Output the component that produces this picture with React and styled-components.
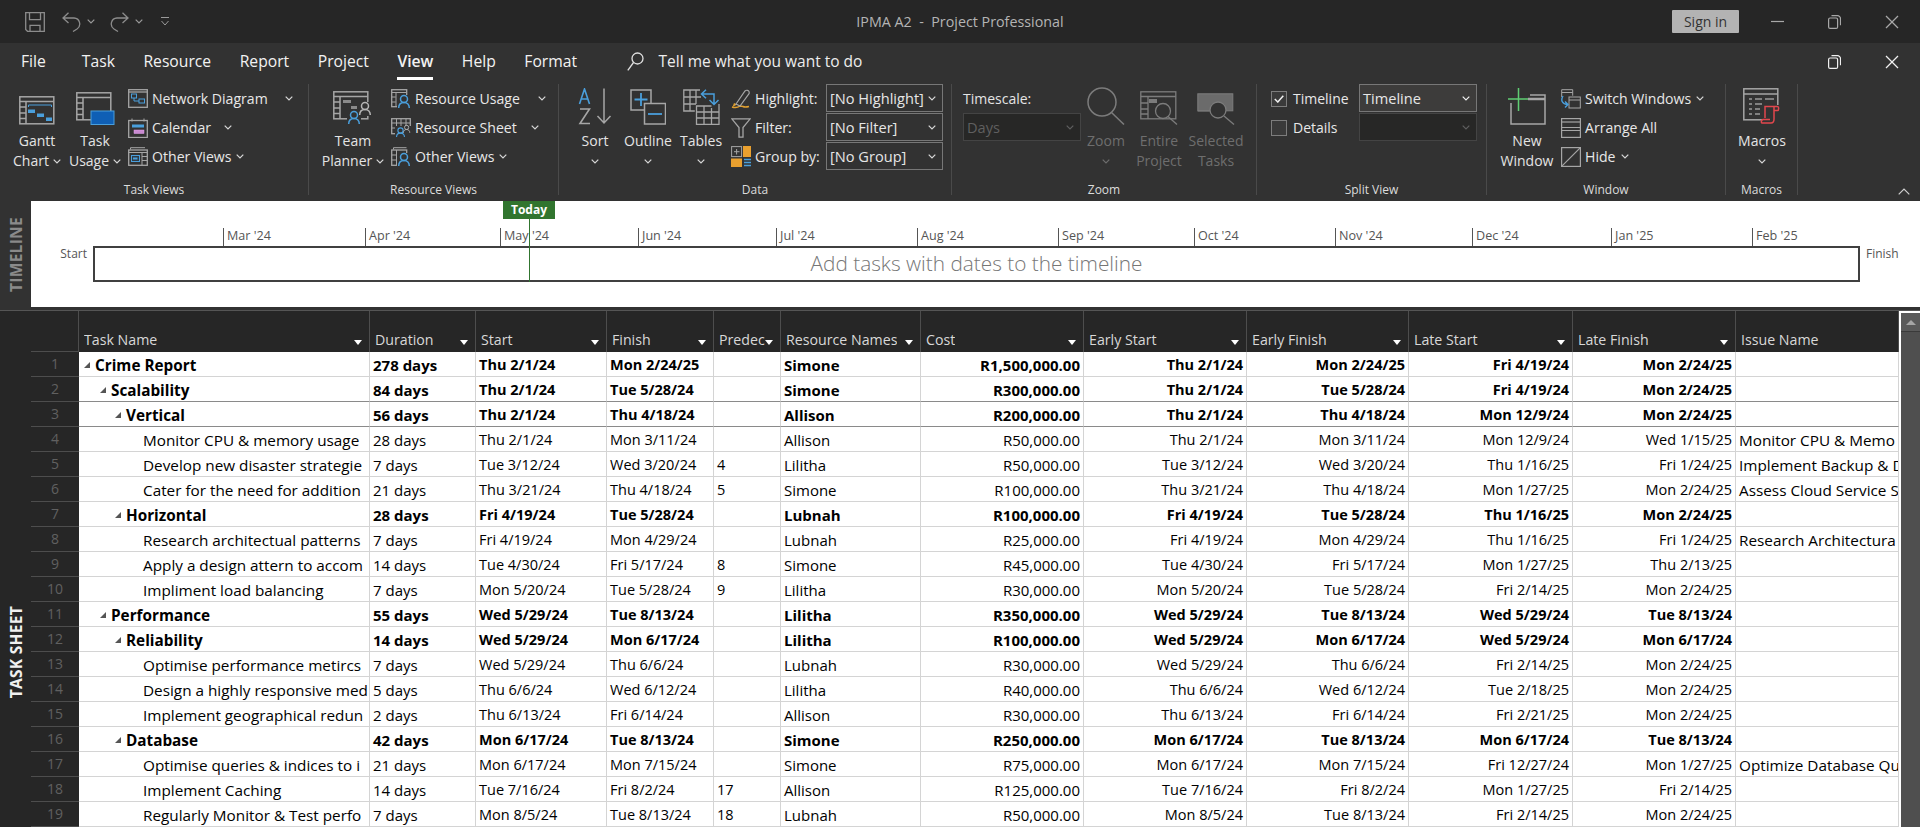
// MS Project view ribbon with timeline and task sheet
import styled, { createGlobalStyle } from "styled-components";

const GlobalStyle = createGlobalStyle`
  html, body {
    margin: 0;
    height: 100%;
    overflow: hidden;
    background: #262626;
  }
  #root {
    height: 100%;
  }
  * {
    box-sizing: border-box;
  }
`;

const Page = styled.div`
  display: flex;
  flex-direction: column;
  width: 1920px;
  height: 827px;
  overflow: hidden;
  font-family: "Open Sans", "Noto Sans", sans-serif;
  font-size: 14px;
  color: #e6e6e6;
`;

/* title bar */
const TitleBar = styled.div`
  display: grid;
  grid-template-columns: 1fr auto 1fr;
  align-items: center;
  height: 43px;
  flex: none;
  background: #262626;
`;

const QuickAccess = styled.div`
  display: flex;
  align-items: center;
  padding-left: 25px;
`;

const QuickGap = styled.span`
  width: ${(p) => p.$width}px;
  flex: none;
`;

const Title = styled.div`
  font-size: 14.3px;
  color: #b4b4b4;
  white-space: pre;
`;

const WindowControls = styled.div`
  display: flex;
  align-items: center;
  justify-content: flex-end;
`;

const SignIn = styled.div`
  width: 67px;
  height: 23px;
  margin-right: 10px;
  background: #b3b3b3;
  color: #333;
  font-size: 14px;
  line-height: 23px;
  text-align: center;
  border-radius: 1px;
`;

const WindowButton = styled.div`
  display: flex;
  align-items: center;
  justify-content: center;
  width: 57px;
  height: 20px;
  flex: none;
`;

/* tabs */
const TabBar = styled.div`
  display: flex;
  align-items: flex-start;
  height: 39px;
  flex: none;
  padding-left: 21px;
  background: #323232;
`;

const Tab = styled.div`
  margin-right: ${(p) => p.$gap || 28.5}px;
  padding-top: 8px;
  height: 37px;
  font-size: 15.7px;
  line-height: 21px;
  color: #f2f2f2;
  font-weight: ${(p) => (p.$active ? 600 : 400)};
  border-bottom: 3px solid ${(p) => (p.$active ? "#fff" : "transparent")};
`;

const SearchBox = styled.div`
  display: flex;
  align-items: center;
  gap: 15px;
  margin-left: 21px;
  padding-top: 8px;
  height: 29px;
  font-size: 15.5px;
  line-height: 21px;
  color: #ededed;
`;

const DocControls = styled.div`
  display: flex;
  margin-left: auto;
  padding-top: 9px;
`;

/* ribbon */
const Ribbon = styled.div`
  display: flex;
  height: 119px;
  flex: none;
  padding: 2px 0 6px;
  background: #323232;
`;

const Group = styled.div`
  display: flex;
  flex-direction: column;
  width: ${(p) => p.$width}px;
  flex: none;
  border-right: 1px solid #4a4a4a;
`;

const GroupBody = styled.div`
  display: flex;
  align-items: flex-start;
  height: 96px;
  padding-left: ${(p) => p.$pad || 0}px;
`;

const GroupLabel = styled.div`
  height: 15px;
  font-size: 12px;
  line-height: 20px;
  text-align: center;
  color: #dcdcdc;
`;

const Collapse = styled.div`
  display: flex;
  flex: 1;
  align-items: flex-end;
  justify-content: flex-end;
  padding: 0 10px 0 0;
`;

const LargeButton = styled.div`
  display: flex;
  flex-direction: column;
  align-items: center;
  width: ${(p) => p.$width}px;
  flex: none;
  color: ${(p) => (p.$disabled ? "#6e6e6e" : "#e4e4e4")};
`;

const LargeIcon = styled.div`
  display: flex;
  align-items: flex-end;
  justify-content: center;
  height: 41px;
  margin-bottom: 6px;
`;

const LargeLine = styled.div`
  display: flex;
  align-items: center;
  gap: 4px;
  height: 20px;
  font-size: 14px;
  line-height: 20px;
  white-space: nowrap;
`;

const SmallColumn = styled.div`
  display: flex;
  flex-direction: column;
  width: ${(p) => (p.$width ? `${p.$width}px` : "auto")};
  margin-left: ${(p) => p.$left || 0}px;
  flex: none;
`;

const SmallButton = styled.div`
  display: flex;
  align-items: center;
  height: 29px;
  font-size: 14.1px;
  color: #e8e8e8;
  white-space: nowrap;
`;

const SmallIcon = styled.div`
  display: flex;
  align-items: center;
  justify-content: center;
  width: 20px;
  height: 22px;
  margin-right: 4px;
  flex: none;
`;

const ChevronSlot = styled.span`
  display: inline-flex;
  margin-left: ${(p) => p.$left || 5}px;
`;

const Combo = styled.div`
  display: flex;
  align-items: center;
  justify-content: space-between;
  width: ${(p) => p.$width}px;
  height: 28px;
  margin-bottom: 1px;
  padding: 0 6px 0 3px;
  border: 1px solid ${(p) => (p.$disabled ? "#444" : "#777")};
  background: ${(p) => (p.$disabled ? "#272726" : p.$light ? "#3d3c3b" : "#323232")};
  color: ${(p) => (p.$disabled ? "#5f5f5f" : "#e6e6e6")};
  font-size: 14.6px;
  white-space: nowrap;
`;

const ScaleLabel = styled.div`
  height: 29px;
  font-size: 14px;
  line-height: 29px;
  color: #e4e4e4;
`;

const CheckRow = styled.div`
  display: flex;
  align-items: center;
  gap: 6px;
  height: 29px;
  font-size: 14px;
  color: #e8e8e8;
`;

const CheckBox = styled.div`
  display: flex;
  align-items: center;
  justify-content: center;
  width: 16px;
  height: 16px;
  border: 1px solid #7d7d7d;
  background: #3a3a3a;
`;

/* timeline */
const TimelinePanel = styled.div`
  display: flex;
  height: 106px;
  flex: none;
`;

const SideStrip = styled.div`
  display: flex;
  justify-content: center;
  align-items: ${(p) => (p.$top ? "flex-start" : "center")};
  width: 31px;
  flex: none;
  padding-top: ${(p) => p.$top || 0}px;
  background: ${(p) => p.$bg};
`;

const SideText = styled.div`
  writing-mode: vertical-rl;
  transform: rotate(180deg);
  font-size: 15.5px;
  font-weight: 700;
  letter-spacing: 0.3px;
  white-space: nowrap;
  color: ${(p) => p.$color};
`;

const TimelineBody = styled.div`
  position: relative;
  flex: 1;
  padding-top: 27px;
  background: #fff;
`;

const TodayTag = styled.div`
  position: absolute;
  left: 472px;
  top: 0;
  width: 52px;
  height: 18px;
  background: #31752f;
  color: #fff;
  font-size: 12px;
  font-weight: 700;
  line-height: 18px;
  text-align: center;
`;

const TodayLine = styled.div`
  position: absolute;
  left: 498px;
  top: 18px;
  width: 1px;
  height: 63px;
  background: #31752f;
`;

const TickRow = styled.div`
  display: flex;
  height: 18px;
  padding-left: 192px;
`;

const Tick = styled.div`
  width: ${(p) => p.$width}px;
  flex: none;
  padding-left: 3px;
  border-left: 1px solid #555;
  font-size: 12.6px;
  line-height: 16px;
  color: #555;
  white-space: nowrap;
`;

const BarRow = styled.div`
  display: flex;
  align-items: flex-start;
`;

const EndLabel = styled.div`
  width: ${(p) => p.$width}px;
  flex: none;
  padding: 0 ${(p) => p.$right || 0}px 0 ${(p) => p.$left || 0}px;
  font-size: 12px;
  line-height: 16px;
  text-align: ${(p) => (p.$left ? "left" : "right")};
  color: #555;
`;

const TimelineBar = styled.div`
  width: 1767px;
  height: 36px;
  flex: none;
  border: 2px solid #404040;
  font-size: 20.8px;
  font-weight: 300;
  line-height: 31px;
  text-align: center;
  color: #767676;
`;

const Divider = styled.div`
  height: 4px;
  flex: none;
  background: #323232;
  border-bottom: 1px solid #555;
`;

/* task sheet */
const SheetPanel = styled.div`
  display: flex;
  flex: 1;
  min-height: 0;
`;

const Sheet = styled.div`
  display: flex;
  flex-direction: column;
  width: 1868px;
  flex: none;
  overflow: hidden;
`;

const COLUMNS = "48px 291px 106px 131px 107px 67px 140px 163px 163px 162px 164px 163px 163px";

const HeaderRow = styled.div`
  display: grid;
  grid-template-columns: ${COLUMNS};
  height: 41px;
  flex: none;
  background: #262626;
`;

const HeaderCell = styled.div`
  display: flex;
  align-items: flex-end;
  justify-content: space-between;
  min-width: 0;
  padding: 0 7px 2px 5px;
  border-right: 1px solid #4d4d4d;
  font-size: 14.2px;
  line-height: 20px;
  color: #d8d8d8;
  white-space: nowrap;
  overflow: hidden;
  &:first-child {
    border-bottom: 1px solid #4d4d4d;
  }
`;

const HeaderText = styled.span`
  min-width: 0;
  overflow: hidden;
`;

const HeaderArrow = styled.span`
  flex: none;
  margin-bottom: 5px;
  border-left: 4px solid transparent;
  border-right: 4px solid transparent;
  border-top: 5px solid #fff;
`;

const Row = styled.div`
  display: grid;
  grid-template-columns: ${COLUMNS};
  height: 25px;
  flex: none;
`;

const RowNumber = styled.div`
  height: 25px;
  border-bottom: 1px solid #4d4d4d;
  background: #262626;
  font-size: 14px;
  line-height: 24px;
  text-align: center;
  color: #606060;
`;

const Cell = styled.div`
  display: flex;
  align-items: center;
  justify-content: ${(p) => (p.$right ? "flex-end" : "flex-start")};
  height: 25px;
  min-width: 0;
  padding: 1px 3px 0 ${(p) => (p.$indent ? p.$indent : 3)}px;
  border-right: 1px solid #d4d4d4;
  border-bottom: 1px solid ${(p) => (p.$line ? "#8a8a8a" : "#d4d4d4")};
  background: #fff;
  color: #000;
  font-size: ${(p) => p.$size || 14.5}px;
  font-weight: ${(p) => (p.$bold ? 700 : 400)};
  white-space: nowrap;
  overflow: hidden;
`;

const Caret = styled.span`
  flex: none;
  width: 0;
  height: 0;
  margin-right: 5px;
  margin-left: ${(p) => p.$left}px;
  border-bottom: 6px solid #555;
  border-left: 6px solid transparent;
`;

const Scrollbar = styled.div`
  display: flex;
  flex-direction: column;
  flex: 1;
  border-left: 2px solid #fff;
  border-top: 2px solid #fff;
  background: #4f4f4f;
`;

const ScrollUp = styled.div`
  display: flex;
  align-items: center;
  justify-content: center;
  height: 19px;
  background: #5a5a5a;
  border-bottom: 1px solid #3a3a3a;
`;

const ScrollArrow = styled.span`
  border-left: 5px solid transparent;
  border-right: 5px solid transparent;
  border-bottom: 5px solid #a6a6a6;
`;

/* icons */
const GR = "#a6a6a6";
const BL = "#4a9fdc";

const Chevron = ({ color = "#d8d8d8" }) => (
  <svg width="8" height="5" viewBox="0 0 8 5">
    <path d="M.7.7 4 4l3.3-3.3" fill="none" stroke={color} strokeWidth="1.2" />
  </svg>
);

const SaveIcon = () => (
  <svg width="20" height="20" viewBox="0 0 20 20" fill="none" stroke="#8c8c8c" strokeWidth="1.3">
    <path d="M.7.7h18.600v18.600H2.500L.7 17.500z" />
    <path d="M4.500.7v7h11v-7M5 19.300v-6h10v6" />
  </svg>
);

const UndoIcon = () => (
  <svg width="19" height="20" viewBox="0 0 19 20" fill="none" stroke="#8c8c8c" strokeWidth="1.3">
    <path d="M1 6h11a6 6 0 0 1 3 11l-4 2.500M6.500.8 1 6l5.500 5" />
  </svg>
);

const RedoIcon = () => (
  <svg width="19" height="20" viewBox="0 0 19 20" fill="none" stroke="#8c8c8c" strokeWidth="1.3">
    <path d="M18 6H7a6 6 0 0 0-3 11l4 2.500M12.500.8 18 6l-5.500 5" />
  </svg>
);

const QatMore = () => (
  <svg width="10" height="10" viewBox="0 0 10 10" fill="none" stroke="#9a9a9a">
    <path d="M1 .5h8M1.500 4 5 8l3.500-4" />
  </svg>
);

const MinimizeIcon = () => (
  <svg width="13" height="3" viewBox="0 0 13 3">
    <path d="M0 1.500h13" stroke="#a8a8a8" strokeWidth="1.200" />
  </svg>
);

const RestoreIcon = ({ color = "#a8a8a8" }) => (
  <svg width="13" height="14" viewBox="0 0 13 14" fill="none" stroke={color} strokeWidth="1.200">
    <rect x=".6" y="3" width="9" height="10.400" rx="1.500" />
    <path d="M3.500.7h6a3 3 0 0 1 3 3v6.500" />
  </svg>
);

const CloseIcon = ({ color = "#a8a8a8" }) => (
  <svg width="14" height="14" viewBox="0 0 14 14" stroke={color} strokeWidth="1.200">
    <line x1="1" y1="1" x2="13" y2="13" />
    <line x1="13" y1="1" x2="1" y2="13" />
  </svg>
);

const SearchIcon = () => (
  <svg width="17" height="19" viewBox="0 0 17 19" fill="none" stroke="#e0e0e0" strokeWidth="1.300">
    <circle cx="10.500" cy="6.500" r="5.500" />
    <path d="M6.500 10.500.8 18.300" />
  </svg>
);

const SheetFrame = ({ c = GR }) => (
  <g fill="none" stroke={c} strokeWidth="1.500">
    <rect x=".8" y=".8" width="34" height="27" />
    <path d="M.8 5.500h34M7 5.500v22.500M.8 11h6M.8 17h6M.8 22.500h6" />
  </g>
);

const GanttIcon = () => (
  <svg width="36" height="29" viewBox="0 0 36 29">
    <SheetFrame />
    <path d="M9.500 11V9h23v2" fill="none" stroke={BL} />
    <rect x="9" y="13.500" width="7" height="3.500" fill={BL} />
    <rect x="18" y="17.500" width="7" height="3.500" fill={BL} />
    <rect x="27" y="21.500" width="6" height="3.500" fill={BL} />
  </svg>
);

const TaskUsageIcon = () => (
  <svg width="39" height="33" viewBox="0 0 39 33">
    <SheetFrame />
    <rect x="15" y="19" width="23" height="13.500" fill="#0f5fb5" stroke="#4a9fdc" />
  </svg>
);

const NetworkIcon = () => (
  <svg width="20" height="19" viewBox="0 0 20 19" fill="none">
    <rect x=".7" y=".7" width="18.600" height="17.600" stroke={GR} strokeWidth="1.300" />
    <path d="M.7 3h18.600" stroke={GR} strokeWidth="1.300" />
    <rect x="3.500" y="5" width="5" height="4" stroke={BL} />
    <rect x="11" y="10" width="5.500" height="4" stroke={BL} />
    <path d="M6 9v3h5" stroke={BL} />
  </svg>
);

const CalendarIcon = () => (
  <svg width="20" height="20" viewBox="0 0 20 20" fill="none">
    <rect x=".7" y="2.500" width="18.600" height="17" stroke={GR} strokeWidth="1.300" />
    <path d="M4 .5v3M16 .5v3" stroke={GR} />
    <rect x="4" y="6.500" width="12" height="3" fill={BL} />
    <rect x="6" y="12" width="10" height="3.500" fill="#c88ad0" stroke="#e59ff0" strokeWidth=".5" />
  </svg>
);

const OtherViewsIcon = () => (
  <svg width="20" height="19" viewBox="0 0 20 19" fill="none">
    <path d="M2.500 2.500V.7h14.500" stroke={GR} />
    <rect x=".7" y="3" width="18.600" height="15.300" stroke={GR} strokeWidth="1.300" />
    <path d="M.7 5.500h18.600M14 5.500v12.500M14 9.500h5M14 13.500h5" stroke={GR} />
    <rect x="3.500" y="8.500" width="8" height="6" fill="#2f3a44" stroke={BL} />
    <rect x="5" y="10.500" width="4.500" height="2" fill={BL} />
  </svg>
);

const Person = ({ x, y, s = 1, c = BL }) => (
  <g transform={`translate(${x} ${y}) scale(${s})`} fill="none" stroke={c} strokeWidth="1.500">
    <circle cx="6" cy="4" r="3.500" />
    <path d="M.7 13c0-3.500 2-5.500 5.300-5.500s5.300 2 5.300 5.500" />
  </g>
);

const TeamPlannerIcon = () => (
  <svg width="40" height="34" viewBox="0 0 40 34">
    <SheetFrame />
    <rect x="10" y="9" width="8" height="3" fill="#8a8a8a" />
    <rect x="18" y="15" width="8" height="3" fill="#8a8a8a" />
    <rect x="24" y="11" width="16" height="14" fill="#323232" />
    <rect x="14" y="19" width="14" height="15" fill="#323232" />
    <Person x="26" y="11" c="#b5b5b5" />
    <Person x="15" y="20" />
  </svg>
);

const ResourceUsageIcon = () => (
  <svg width="20" height="19" viewBox="0 0 20 19">
    <rect x=".7" y=".7" width="15" height="17" fill="none" stroke={GR} strokeWidth="1.300" />
    <path d="M.7 3.500h15M5 3.500V18M.7 8h4M.7 13h4" fill="none" stroke={GR} />
    <rect x="6" y="6" width="14" height="13" fill="#323232" />
    <Person x="7" y="6" />
  </svg>
);

const ResourceSheetIcon = () => (
  <svg width="20" height="19" viewBox="0 0 20 19">
    <rect x=".7" y=".7" width="18.600" height="15" fill="none" stroke={GR} strokeWidth="1.300" />
    <path d="M.7 5h18.600M.7 10h18.600M5.500.7v17M10 .7v15M15 .7v15" fill="none" stroke={GR} />
    <rect x="4" y="8" width="16" height="11" fill="#323232" />
    <Person x="5" y="9.500" s=".75" />
    <Person x="12" y="7" s=".6" c="#b5b5b5" />
  </svg>
);

const OtherResourceIcon = () => (
  <svg width="20" height="19" viewBox="0 0 20 19">
    <path d="M2.500 2.500V.7h13" fill="none" stroke={GR} />
    <rect x=".7" y="3" width="15" height="15.300" fill="none" stroke={GR} strokeWidth="1.300" />
    <path d="M5.500 3v15M.7 8h5M.7 13h5" fill="none" stroke={GR} />
    <rect x="6" y="6" width="14" height="13" fill="#323232" />
    <Person x="7" y="6" />
  </svg>
);

const SortIcon = () => (
  <svg width="34" height="37" viewBox="0 0 34 37" fill="none">
    <path d="M1.500 16 6.500 1l5 15M3.300 11h6.400" stroke={BL} strokeWidth="1.600" />
    <path d="M2 21h9.500L2 35.500h10" stroke={GR} strokeWidth="1.600" />
    <path d="M26 .5V35M19.500 28 26 35l6.500-7" stroke={GR} strokeWidth="1.500" />
  </svg>
);

const OutlineIcon = () => (
  <svg width="36" height="36" viewBox="0 0 36 36" fill="none">
    <path d="M21 14V.9H1v20h13" stroke={GR} strokeWidth="1.500" />
    <rect x="14.500" y="14.500" width="21" height="20.500" stroke={GR} strokeWidth="1.500" />
    <path d="M11 4v13M4.500 10.500h13" stroke={BL} strokeWidth="1.800" />
    <path d="M18 25h14" stroke={BL} strokeWidth="1.800" />
  </svg>
);

const TablesIcon = () => (
  <svg width="37" height="36" viewBox="0 0 37 36" fill="none">
    <path d="M17 1H.8v21h11M1 8h17M1 15h12M7 1v21M13 1v14" stroke={GR} strokeWidth="1.300" />
    <path d="M36 15v20.300H13.500V17h15M13.500 23h22.500M13.500 29h22.500M21 17v18M28.500 19v16" stroke={GR} strokeWidth="1.300" />
    <path d="M31 15V5H19M23 .8 18.500 5l4.500 4.200M26.500 11l4.500 4.500 4.500-4.500" stroke={BL} strokeWidth="1.500" />
  </svg>
);

const HighlightIcon = () => (
  <svg width="20" height="20" viewBox="0 0 20 20" fill="none">
    <path d="M1 18c3 1 6 .5 8-1l3 .5c2 1 4 .5 6 0" stroke="#e0a030" strokeWidth="1.500" />
    <path d="M3 14 1.500 18 6 15.500z" fill="#e0a030" />
    <path d="M5 15 14 2c1.500-1.500 3.500-.5 4 .5s.5 2-.5 3L9 17z" stroke={GR} strokeWidth="1.200" />
  </svg>
);

const FilterIcon = () => (
  <svg width="20" height="20" viewBox="0 0 20 20" fill="none" stroke={GR} strokeWidth="1.300">
    <path d="M.8.8h18.400L12 9.500v9.700H8V9.500z" />
  </svg>
);

const GroupByIcon = () => (
  <svg width="20" height="21" viewBox="0 0 20 21">
    <rect x=".6" y=".6" width="10" height="10" fill="none" stroke={GR} />
    <path d="M5.600 3v5.500M3 5.700h5.500" stroke={GR} />
    <rect x="12" y="0" width="8" height="11" fill="#e9a02f" />
    <rect x="0" y="12.500" width="11" height="8.500" fill="#e9a02f" />
    <path d="M13 13.500h7M13 16.500h7M13 19.500h7" stroke={BL} strokeWidth="1.400" />
  </svg>
);

const ZoomIcon = () => (
  <svg width="38" height="38" viewBox="0 0 38 38" fill="none" stroke="#7c7c7c" strokeWidth="1.500">
    <circle cx="15" cy="15" r="14" />
    <path d="M24.500 25.500 37 37.500" />
  </svg>
);

const EntireIcon = () => (
  <svg width="38" height="34" viewBox="0 0 38 34">
    <g fill="none" stroke="#7c7c7c" strokeWidth="1.300">
      <rect x=".8" y=".8" width="35" height="27" />
      <path d="M.8 5.500h35M8 5.500v22.500M.8 12h7M.8 18h7M.8 23h7" />
    </g>
    <rect x="9" y="8" width="8" height="4" fill="#7c7c7c" />
    <circle cx="23" cy="20" r="7.500" fill="#323232" stroke="#7c7c7c" strokeWidth="1.300" />
    <path d="M28 25.500 37 33.500" stroke="#7c7c7c" strokeWidth="1.300" />
  </svg>
);

const SelectedIcon = () => (
  <svg width="38" height="32" viewBox="0 0 38 32">
    <rect x=".8" y=".8" width="35" height="17" fill="#6b6b6b" stroke="#7c7c7c" />
    <path d="M.8 18h12" stroke="#7c7c7c" />
    <circle cx="21" cy="17" r="8" fill="#323232" stroke="#7c7c7c" strokeWidth="1.300" />
    <path d="M27 23 37 31.500" stroke="#7c7c7c" strokeWidth="1.300" />
  </svg>
);

const NewWindowIcon = () => (
  <svg width="38" height="37" viewBox="0 0 38 37" fill="none">
    <path d="M3 15v21h34V7H22" stroke={GR} strokeWidth="1.500" />
    <path d="M20 11h17" stroke={GR} strokeWidth="2.500" />
    <path d="M10.500 0v23M0 11h20" stroke="#5fce73" strokeWidth="1.500" />
  </svg>
);

const SwitchIcon = () => (
  <svg width="20" height="20" viewBox="0 0 20 20" fill="none">
    <path d="M.7 8V.7h11v6M.7 3.500h11" stroke={GR} />
    <rect x="8" y="8" width="11.300" height="11" stroke={GR} />
    <path d="M8 11h11" stroke={GR} />
    <path d="M2 7C-.5 11 1 15 6 15.500M4 12.500l3 3-3 3" stroke={BL} strokeWidth="1.400" />
  </svg>
);

const ArrangeIcon = () => (
  <svg width="20" height="20" viewBox="0 0 20 20" fill="none" stroke={GR} strokeWidth="1.200">
    <rect x=".6" y=".6" width="18.800" height="18.800" />
    <path d="M.6 4h18.800" />
    <path d="M.6 9.500h18.800M.6 12.500h18.800" />
  </svg>
);

const HideIcon = () => (
  <svg width="20" height="20" viewBox="0 0 20 20" fill="none" stroke={GR} strokeWidth="1.200">
    <rect x=".6" y=".6" width="18.800" height="18.800" />
    <path d="M.6 19.400 19.400.6" />
  </svg>
);

const MacrosIcon = () => (
  <svg width="38" height="37" viewBox="0 0 38 37" fill="none">
    <rect x=".8" y=".8" width="34" height="31" stroke={GR} strokeWidth="1.500" />
    <path d="M.8 6h34" stroke={GR} strokeWidth="1.500" />
    <path d="M6 11h3M12 11h7M22 11h9M6 16h3M12 16h7M6 21h3M12 21h5M6 26h3M12 26h5" stroke="#9a9a9a" strokeWidth="1.300" />
    <rect x="19" y="17" width="18" height="20" fill="#323232" stroke="none" />
    <path d="M22 30V18.500h12.500c1.500 0 1.500 4 0 4H31M31 18.500V31c0 3-1 4-3 4H19c-1 0-1-3 1-3.500h7" stroke="#e2474d" strokeWidth="1.500" />
  </svg>
);

const CheckMark = () => (
  <svg width="10" height="8" viewBox="0 0 10 8" fill="none">
    <path d="M.8 4 3.800 7 9.300.8" stroke="#f0f0f0" strokeWidth="1.500" />
  </svg>
);

const TABS = ["Task", "Resource", "Report", "Project", "View", "Help", "Format"];

const MONTHS = [
  ["Mar '24", 142],
  ["Apr '24", 135],
  ["May '24", 138],
  ["Jun '24", 138],
  ["Jul '24", 141],
  ["Aug '24", 141],
  ["Sep '24", 136],
  ["Oct '24", 141],
  ["Nov '24", 137],
  ["Dec '24", 139],
  ["Jan '25", 141],
  ["Feb '25", 60],
];

const HEADERS = [
  "Task Name",
  "Duration",
  "Start",
  "Finish",
  "Predec",
  "Resource Names",
  "Cost",
  "Early Start",
  "Early Finish",
  "Late Start",
  "Late Finish",
];

// level: 0-2 summary rows, 3 leaf tasks
const TASKS = [
  [0, "Crime Report", "278 days", "Thu 2/1/24", "Mon 2/24/25", "", "Simone", "R1,500,000.00", "Fri 4/19/24", "Mon 2/24/25", ""],
  [1, "Scalability", "84 days", "Thu 2/1/24", "Tue 5/28/24", "", "Simone", "R300,000.00", "Fri 4/19/24", "Mon 2/24/25", ""],
  [2, "Vertical", "56 days", "Thu 2/1/24", "Thu 4/18/24", "", "Allison", "R200,000.00", "Mon 12/9/24", "Mon 2/24/25", ""],
  [3, "Monitor CPU & memory usage", "28 days", "Thu 2/1/24", "Mon 3/11/24", "", "Allison", "R50,000.00", "Mon 12/9/24", "Wed 1/15/25", "Monitor CPU & Memo"],
  [3, "Develop new disaster strategie", "7 days", "Tue 3/12/24", "Wed 3/20/24", "4", "Lilitha", "R50,000.00", "Thu 1/16/25", "Fri 1/24/25", "Implement Backup & D"],
  [3, "Cater for the need for addition", "21 days", "Thu 3/21/24", "Thu 4/18/24", "5", "Simone", "R100,000.00", "Mon 1/27/25", "Mon 2/24/25", "Assess Cloud Service S"],
  [2, "Horizontal", "28 days", "Fri 4/19/24", "Tue 5/28/24", "", "Lubnah", "R100,000.00", "Thu 1/16/25", "Mon 2/24/25", ""],
  [3, "Research architectual patterns", "7 days", "Fri 4/19/24", "Mon 4/29/24", "", "Lubnah", "R25,000.00", "Thu 1/16/25", "Fri 1/24/25", "Research Architectura"],
  [3, "Apply a design attern to accom", "14 days", "Tue 4/30/24", "Fri 5/17/24", "8", "Simone", "R45,000.00", "Mon 1/27/25", "Thu 2/13/25", ""],
  [3, "Impliment load balancing", "7 days", "Mon 5/20/24", "Tue 5/28/24", "9", "Lilitha", "R30,000.00", "Fri 2/14/25", "Mon 2/24/25", ""],
  [1, "Performance", "55 days", "Wed 5/29/24", "Tue 8/13/24", "", "Lilitha", "R350,000.00", "Wed 5/29/24", "Tue 8/13/24", ""],
  [2, "Reliability", "14 days", "Wed 5/29/24", "Mon 6/17/24", "", "Lilitha", "R100,000.00", "Wed 5/29/24", "Mon 6/17/24", ""],
  [3, "Optimise performance metircs", "7 days", "Wed 5/29/24", "Thu 6/6/24", "", "Lubnah", "R30,000.00", "Fri 2/14/25", "Mon 2/24/25", ""],
  [3, "Design a highly responsive med", "5 days", "Thu 6/6/24", "Wed 6/12/24", "", "Lilitha", "R40,000.00", "Tue 2/18/25", "Mon 2/24/25", ""],
  [3, "Implement geographical redun", "2 days", "Thu 6/13/24", "Fri 6/14/24", "", "Allison", "R30,000.00", "Fri 2/21/25", "Mon 2/24/25", ""],
  [2, "Database", "42 days", "Mon 6/17/24", "Tue 8/13/24", "", "Simone", "R250,000.00", "Mon 6/17/24", "Tue 8/13/24", ""],
  [3, "Optimise queries & indices to i", "21 days", "Mon 6/17/24", "Mon 7/15/24", "", "Simone", "R75,000.00", "Fri 12/27/24", "Mon 1/27/25", "Optimize Database Qu"],
  [3, "Implement Caching", "14 days", "Tue 7/16/24", "Fri 8/2/24", "17", "Allison", "R125,000.00", "Mon 1/27/25", "Fri 2/14/25", ""],
  [3, "Regularly Monitor & Test perfo", "7 days", "Mon 8/5/24", "Tue 8/13/24", "18", "Lubnah", "R50,000.00", "Fri 2/14/25", "Mon 2/24/25", ""],
];

const Big = ({ width, icon, lines, chevronOnly, disabled }) => (
  <LargeButton $width={width} $disabled={disabled}>
    <LargeIcon>{icon}</LargeIcon>
    {lines.map((line, i) => (
      <LargeLine key={line}>
        {line}
        {!chevronOnly && i === lines.length - 1 && line !== "Window" && line !== "Project" && line !== "Tasks" && (
          <Chevron color={disabled ? "#6e6e6e" : "#d8d8d8"} />
        )}
      </LargeLine>
    ))}
    {chevronOnly && (
      <LargeLine>
        <Chevron color={disabled ? "#6e6e6e" : "#d8d8d8"} />
      </LargeLine>
    )}
  </LargeButton>
);

const Small = ({ icon, text, chevron }) => (
  <SmallButton>
    <SmallIcon>{icon}</SmallIcon>
    {text}
    {chevron && (
      <ChevronSlot $left={chevron}>
        <Chevron />
      </ChevronSlot>
    )}
  </SmallButton>
);

const TaskRow = ({ task, index }) => {
  const [level, name, duration, start, finish, pred, resource, cost, lateStart, lateFinish, issue] = task;
  const bold = level < 3;
  const line = index === 1 || index === 2;
  const caretLeft = [4, 20, 35][level];
  return (
    <Row>
      <RowNumber>{index + 1}</RowNumber>
      <Cell $bold={bold} $line={line} $size={15.3} $indent={bold ? 1 : 64}>
        {bold && <Caret $left={caretLeft} />}
        {name}
      </Cell>
      <Cell $bold={bold} $line={line} $size={15}>
        {duration}
      </Cell>
      <Cell $bold={bold} $line={line}>
        {start}
      </Cell>
      <Cell $bold={bold} $line={line}>
        {finish}
      </Cell>
      <Cell $bold={bold} $line={line}>
        {pred}
      </Cell>
      <Cell $bold={bold} $line={line} $size={15}>
        {resource}
      </Cell>
      <Cell $bold={bold} $line={line} $size={15} $right>
        {cost}
      </Cell>
      <Cell $bold={bold} $line={line} $right>
        {start}
      </Cell>
      <Cell $bold={bold} $line={line} $right>
        {finish}
      </Cell>
      <Cell $bold={bold} $line={line} $right>
        {lateStart}
      </Cell>
      <Cell $bold={bold} $line={line} $right>
        {lateFinish}
      </Cell>
      <Cell $line={line} $size={15.3}>
        {issue}
      </Cell>
    </Row>
  );
};

export default function App() {
  return (
    <Page>
      <GlobalStyle />
      <TitleBar>
        <QuickAccess>
          <SaveIcon />
          <QuickGap $width={17} />
          <UndoIcon />
          <QuickGap $width={6} />
          <Chevron color="#9a9a9a" />
          <QuickGap $width={15} />
          <RedoIcon />
          <QuickGap $width={6} />
          <Chevron color="#9a9a9a" />
          <QuickGap $width={17} />
          <QatMore />
        </QuickAccess>
        <Title>IPMA A2  -  Project Professional</Title>
        <WindowControls>
          <SignIn>Sign in</SignIn>
          <WindowButton>
            <MinimizeIcon />
          </WindowButton>
          <WindowButton>
            <RestoreIcon />
          </WindowButton>
          <WindowButton>
            <CloseIcon />
          </WindowButton>
        </WindowControls>
      </TitleBar>

      <TabBar>
        <Tab $gap={36}>File</Tab>
        {TABS.map((tab) => (
          <Tab key={tab} $active={tab === "View"}>
            {tab}
          </Tab>
        ))}
        <SearchBox>
          <SearchIcon />
          Tell me what you want to do
        </SearchBox>
        <DocControls>
          <WindowButton>
            <RestoreIcon color="#f0f0f0" />
          </WindowButton>
          <WindowButton>
            <CloseIcon color="#f0f0f0" />
          </WindowButton>
        </DocControls>
      </TabBar>

      <Ribbon>
        <Group $width={309}>
          <GroupBody $pad={10}>
            <Big width={54} icon={<GanttIcon />} lines={["Gantt", "Chart"]} />
            <Big width={62} icon={<TaskUsageIcon />} lines={["Task", "Usage"]} />
            <SmallColumn $left={2}>
              <Small icon={<NetworkIcon />} text="Network Diagram" chevron={17} />
              <Small icon={<CalendarIcon />} text="Calendar" chevron={13} />
              <Small icon={<OtherViewsIcon />} text="Other Views" chevron={5} />
            </SmallColumn>
          </GroupBody>
          <GroupLabel>Task Views</GroupLabel>
        </Group>

        <Group $width={250}>
          <GroupBody $pad={15}>
            <Big width={58} icon={<TeamPlannerIcon />} lines={["Team", "Planner"]} />
            <SmallColumn $left={9}>
              <Small icon={<ResourceUsageIcon />} text="Resource Usage" chevron={18} />
              <Small icon={<ResourceSheetIcon />} text="Resource Sheet" chevron={14} />
              <Small icon={<OtherResourceIcon />} text="Other Views" chevron={5} />
            </SmallColumn>
          </GroupBody>
          <GroupLabel>Resource Views</GroupLabel>
        </Group>

        <Group $width={393}>
          <GroupBody $pad={11}>
            <Big width={50} icon={<SortIcon />} lines={["Sort"]} chevronOnly />
            <Big width={56} icon={<OutlineIcon />} lines={["Outline"]} chevronOnly />
            <Big width={50} icon={<TablesIcon />} lines={["Tables"]} chevronOnly />
            <SmallColumn $left={5} $width={95}>
              <Small icon={<HighlightIcon />} text="Highlight:" />
              <Small icon={<FilterIcon />} text="Filter:" />
              <Small icon={<GroupByIcon />} text="Group by:" />
            </SmallColumn>
            <SmallColumn>
              <Combo $width={117}>
                [No Highlight] <Chevron />
              </Combo>
              <Combo $width={117}>
                [No Filter] <Chevron />
              </Combo>
              <Combo $width={117}>
                [No Group] <Chevron />
              </Combo>
            </SmallColumn>
          </GroupBody>
          <GroupLabel>Data</GroupLabel>
        </Group>

        <Group $width={305}>
          <GroupBody $pad={11}>
            <SmallColumn $width={118}>
              <ScaleLabel>Timescale:</ScaleLabel>
              <Combo $width={118} $disabled>
                Days <Chevron color="#5f5f5f" />
              </Combo>
            </SmallColumn>
            <Big width={50} icon={<ZoomIcon />} lines={["Zoom"]} chevronOnly disabled />
            <Big width={56} icon={<EntireIcon />} lines={["Entire", "Project"]} disabled />
            <Big width={58} icon={<SelectedIcon />} lines={["Selected", "Tasks"]} disabled />
          </GroupBody>
          <GroupLabel>Zoom</GroupLabel>
        </Group>

        <Group $width={230}>
          <GroupBody $pad={14}>
            <SmallColumn $width={88}>
              <CheckRow>
                <CheckBox>
                  <CheckMark />
                </CheckBox>
                Timeline
              </CheckRow>
              <CheckRow>
                <CheckBox />
                Details
              </CheckRow>
            </SmallColumn>
            <SmallColumn>
              <Combo $width={118} $light>
                Timeline <Chevron color="#f0f0f0" />
              </Combo>
              <Combo $width={118} $disabled>
                <span />
                <Chevron color="#5f5f5f" />
              </Combo>
            </SmallColumn>
          </GroupBody>
          <GroupLabel>Split View</GroupLabel>
        </Group>

        <Group $width={239}>
          <GroupBody $pad={9}>
            <Big width={62} icon={<NewWindowIcon />} lines={["New", "Window"]} />
            <SmallColumn $left={3}>
              <Small icon={<SwitchIcon />} text="Switch Windows" chevron={5} />
              <Small icon={<ArrangeIcon />} text="Arrange All" />
              <Small icon={<HideIcon />} text="Hide" chevron={5} />
            </SmallColumn>
          </GroupBody>
          <GroupLabel>Window</GroupLabel>
        </Group>

        <Group $width={72}>
          <GroupBody>
            <Big width={72} icon={<MacrosIcon />} lines={["Macros"]} chevronOnly />
          </GroupBody>
          <GroupLabel>Macros</GroupLabel>
        </Group>

        <Collapse>
          <svg width="12" height="7" viewBox="0 0 12 7">
            <path d="M.7 6.300 6 1l5.300 5.300" fill="none" stroke="#d0d0d0" strokeWidth="1.200" />
          </svg>
        </Collapse>
      </Ribbon>

      <TimelinePanel>
        <SideStrip $bg="#323232">
          <SideText $color="#8a8a8a">TIMELINE</SideText>
        </SideStrip>
        <TimelineBody>
          <TodayTag>Today</TodayTag>
          <TodayLine />
          <TickRow>
            {MONTHS.map(([label, width]) => (
              <Tick key={label} $width={width}>
                {label}
              </Tick>
            ))}
          </TickRow>
          <BarRow>
            <EndLabel $width={62} $right={6}>
              Start
            </EndLabel>
            <TimelineBar>Add tasks with dates to the timeline</TimelineBar>
            <EndLabel $width={45} $left={6}>
              Finish
            </EndLabel>
          </BarRow>
        </TimelineBody>
      </TimelinePanel>

      <Divider />

      <SheetPanel>
        <SideStrip $bg="#262626" $top={295}>
          <SideText $color="#f0f0f0">TASK SHEET</SideText>
        </SideStrip>
        <Sheet>
          <HeaderRow>
            <HeaderCell />
            {HEADERS.map((header) => (
              <HeaderCell key={header}>
                <HeaderText>{header}</HeaderText>
                <HeaderArrow />
              </HeaderCell>
            ))}
            <HeaderCell>
              <HeaderText>Issue Name</HeaderText>
            </HeaderCell>
          </HeaderRow>
          {TASKS.map((task, i) => (
            <TaskRow key={task[1]} task={task} index={i} />
          ))}
        </Sheet>
        <Scrollbar>
          <ScrollUp>
            <ScrollArrow />
          </ScrollUp>
        </Scrollbar>
      </SheetPanel>
    </Page>
  );
}
